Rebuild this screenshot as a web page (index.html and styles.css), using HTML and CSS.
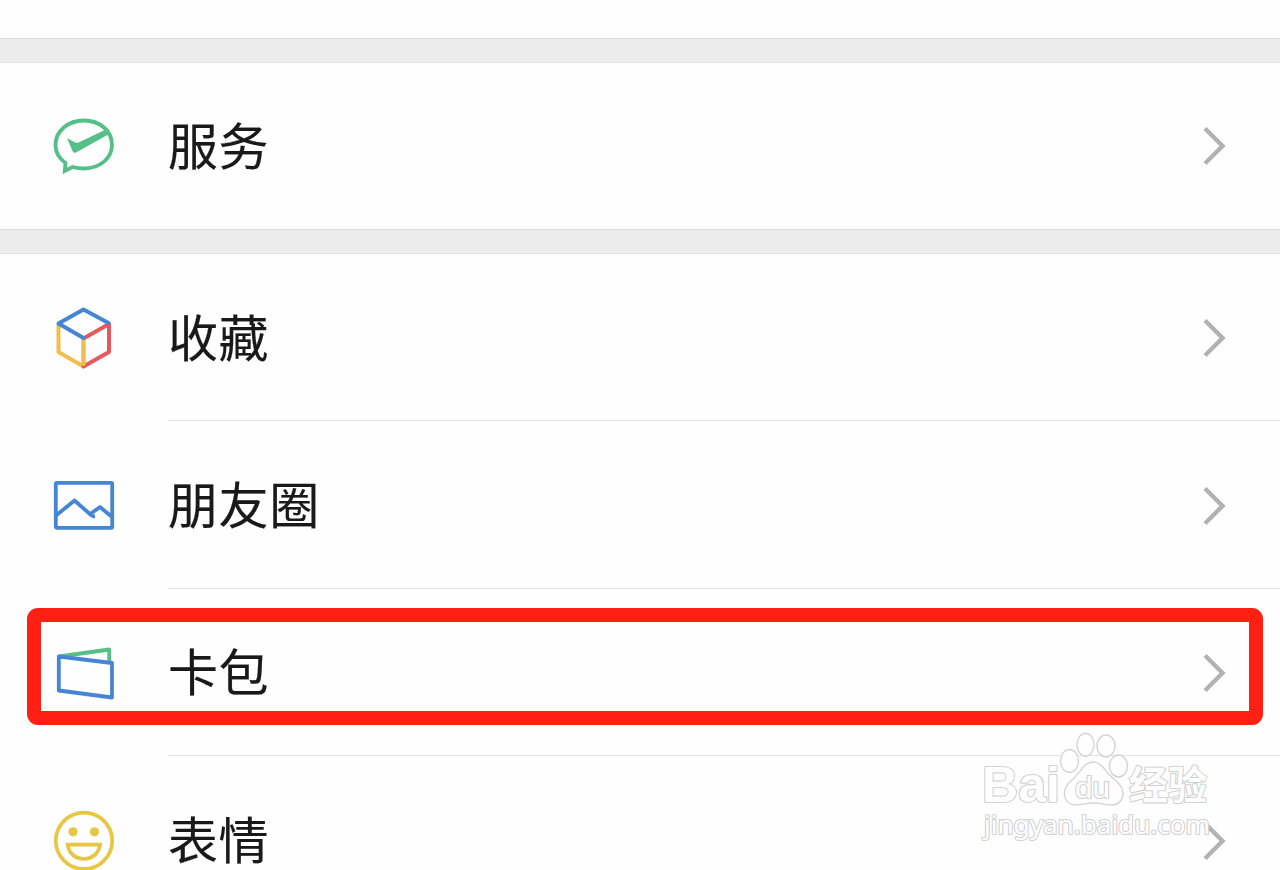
FILE: index.html
```html
<!DOCTYPE html>
<html lang="zh-CN">
<head>
    <meta charset="UTF-8">
    <title>我</title>
    <link rel="stylesheet" href="styles.css">
</head>
<body>

<svg class="defs" width="0" height="0">
    <symbol id="chevron" viewBox="0 0 24 40">
        <path d="M2 2.500 L19.500 20 L2 37.500" fill="none" stroke="#b2b2b2" stroke-width="4.4"/>
    </symbol>
</svg>

<div class="page">
    <div class="gap"></div>

    <!-- Services -->
    <div class="group">
        <div class="row first">
            <svg class="icon" viewBox="0 0 64 64">
                <path d="M13.5 49 C6.500 44 3.5 37.500 3.5 31 C3.5 17 16 6.500 32 6.500 C48 6.500 60 17 60 31 C60 44 48 54.500 32 54.500 C28 54.500 24 54 20.500 53 L12.8 57 Z" fill="none" stroke="#55bf88" stroke-width="3.8"/>
                <path d="M15 24 L23 28.500 Q24.500 29 26.500 28.500 L56 14.500 L58 19.500 L24 38.500 Q21.500 39.500 20.500 37 Z" fill="#55bf88"/>
            </svg>
            <div class="content">
                <span class="label">服务</span>
                <svg class="arrow"><use href="#chevron"/></svg>
            </div>
        </div>
    </div>

    <div class="gap"></div>

    <div class="group">
        <!-- Favoris -->
        <div class="row">
            <svg class="icon" viewBox="0 0 64 64">
                <g fill="none" stroke-width="4" stroke-linejoin="round" stroke-linecap="round">
                    <path d="M6.500 19 V46 L31.500 60.500 V33" stroke="#f0be4d"/>
                    <path d="M31.500 60.500 L57 46 V18 L31.500 32.500" stroke="#e45a5c"/>
                    <path d="M31.500 34 V58" stroke="#f0be4d"/>
                    <path d="M56.500 17 L31.500 3.500 L6.500 17.500 L31.500 32" stroke="#4485d6"/>
                </g>
            </svg>
            <div class="content">
                <span class="label">收藏</span>
                <svg class="arrow"><use href="#chevron"/></svg>
            </div>
        </div>

        <!-- Moments -->
        <div class="row">
            <svg class="icon" viewBox="0 0 64 64">
                <g fill="none" stroke="#4485d6" stroke-width="3.8" stroke-linejoin="round">
                    <rect x="3.800" y="9.800" width="56.400" height="45" rx="1"/>
                    <path d="M4 42.500 L22.500 27.500 L39 42 Q40.500 43.500 43 43.500"/>
                    <path d="M37.500 41.500 L48 34 L60 44"/>
                </g>
            </svg>
            <div class="content">
                <span class="label">朋友圈</span>
                <svg class="arrow"><use href="#chevron"/></svg>
            </div>
        </div>

        <!-- Cartes, encadré en rouge -->
        <div class="row">
            <svg class="icon" viewBox="0 0 64 64">
                <g fill="none" stroke-width="3.8" stroke-linejoin="round">
                    <path d="M7 16.500 L57.200 9.500 V22" stroke="#55bf88"/>
                    <path d="M6.800 16.500 L60 23 V57.500 L6.800 50.500 Z" stroke="#4485d6"/>
                </g>
            </svg>
            <div class="content">
                <span class="label">卡包</span>
                <svg class="arrow"><use href="#chevron"/></svg>
            </div>
            <div class="highlight"></div>
        </div>

        <!-- Stickers -->
        <div class="row">
            <svg class="icon" viewBox="0 0 64 64">
                <g transform="translate(0 0.800)">
                    <circle cx="32" cy="32" r="28.200" fill="none" stroke="#e8c645" stroke-width="3.8"/>
                    <circle cx="21" cy="23" r="4.600" fill="#e8c645"/>
                    <circle cx="42.500" cy="23" r="4.600" fill="#e8c645"/>
                    <path d="M15.800 35.800 H48 C47 44.500 40 50 32 50 C23.500 50 16.500 44.500 15.800 35.800 Z" fill="none" stroke="#e8c645" stroke-width="3.8"/>
                </g>
            </svg>
            <div class="content">
                <span class="label">表情</span>
                <svg class="arrow"><use href="#chevron"/></svg>
            </div>
        </div>
    </div>

    <!-- Filigrane par-dessus la liste -->
    <svg class="watermark" viewBox="0 0 240 115">
        <g class="paw">
            <ellipse cx="89.500" cy="31" rx="9" ry="11.500"/>
            <ellipse cx="105.500" cy="14.800" rx="8.500" ry="11.500"/>
            <ellipse cx="126" cy="16" rx="9" ry="11"/>
            <ellipse cx="138.500" cy="36" rx="9" ry="11"/>
            <path d="M113 32 C122 32 125 42 134 49 C149 61 143 75 132 75 C125 75 122 73 113 73 C105 73 102 75 96 75 C83 75 80 60 92 50 C101 42 104 32 113 32 Z"/>
        </g>
        <text class="brand" x="2" y="72" textLength="78" lengthAdjust="spacingAndGlyphs">Bai</text>
        <text class="du" x="95" y="68" textLength="35" lengthAdjust="spacingAndGlyphs">du</text>
        <text class="cn" x="149" y="69" textLength="78">经验</text>
        <text class="url" x="4" y="104" textLength="226" lengthAdjust="spacingAndGlyphs">jingyan.baidu.com</text>
    </svg>
</div>

</body>
</html>
```
FILE: styles.css
```css
body {
    margin: 0;
    background-color: #fefefe;
    color: #191919;
    font-family: "Noto Sans CJK SC", sans-serif;
}

.defs {
    position: absolute;
}

.page {
    position: relative;
    height: 870px;
    padding-top: 38px;
    box-sizing: border-box;
    overflow: hidden;
}

/* Bande grise entre les groupes */
.gap {
    height: 25px;
    box-sizing: border-box;
    background-color: #ececec;
    border-top: 1px solid #dadada;
    border-bottom: 1px solid #e4e4e4;
}

.row {
    position: relative;
    display: flex;
    align-items: center;
    height: 167.4px;
    padding-left: 52px;
}

.row.first {
    height: 166px;
}

.icon {
    width: 64px;
    height: 64px;
    flex: none;
}

.content {
    display: flex;
    flex: 1;
    align-items: center;
    justify-content: space-between;
    height: 100%;
    box-sizing: border-box;
    margin-left: 52px;
    padding-top: 2px;
    padding-right: 53px;
    border-bottom: 1px solid #e4e4e4;
}

.first .content {
    padding-top: 0;
}

.first .content,
.row:last-child .content {
    border-bottom: none;
}

.label {
    margin-bottom: 7px;
    font-size: 50px;
    line-height: 60px;
    letter-spacing: 0.6px;
    -webkit-text-stroke: 0.2px #191919;
}

.arrow {
    width: 24px;
    height: 40px;
}

/* Cadre rouge autour de la ligne */
.highlight {
    position: absolute;
    top: 19px;
    left: 27px;
    right: 17px;
    height: 117px;
    box-sizing: border-box;
    border: 14px solid #ff1f13;
    border-radius: 11px;
}

.watermark {
    position: absolute;
    left: 980px;
    top: 730px;
    width: 240px;
    height: 115px;
}

.paw {
    fill: #fefefe;
    stroke: #d4d4d4;
    stroke-width: 1.4;
}

/* Texte blanc avec un contour gris */
.watermark text {
    fill: #fefefe;
    stroke: #d2d2d2;
    stroke-width: 2.2;
    stroke-linejoin: round;
    paint-order: stroke;
}

.brand,
.du {
    font-family: "Liberation Sans", Arial, sans-serif;
}

.brand {
    font-size: 50px;
    font-weight: bold;
}

.du {
    font-size: 30px;
}

.cn {
    font-size: 39px;
    font-weight: bold;
}

.url {
    font-family: "Noto Sans", sans-serif;
    font-size: 25px;
}
```
